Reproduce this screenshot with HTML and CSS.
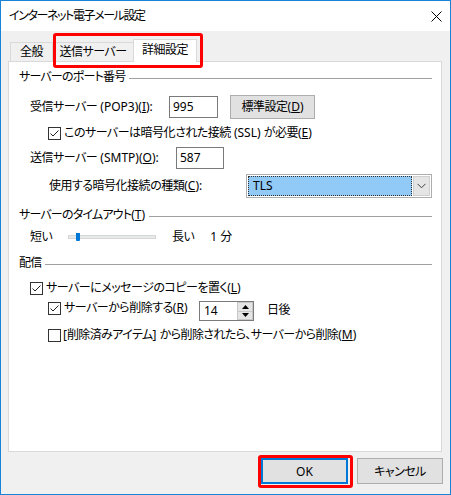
FILE: index.html
```html
<!DOCTYPE html>
<html lang="ja">
<head>
<meta charset="utf-8">
<title>インターネット電子メール設定</title>
<link rel="stylesheet" href="styles.css">
</head>
<body>
<div class="window">
  <div class="titlebar">
    <span class="title">インターネット電子メール設定</span>
    <svg class="close" width="11" height="11" viewBox="0 0 11 11"><path d="M0.5 0.5 L10.5 10.5 M10.5 0.5 L0.5 10.5" stroke="#000" stroke-width="1" fill="none"/></svg>
  </div>
  <div class="client">
    <div class="tabs">
      <div class="tab t1">全般</div>
      <div class="tab t2">送信サーバー</div>
      <div class="tab t3 active">詳細設定</div>
    </div>
    <div class="panel">
      <div class="group-header"><span>サーバーのポート番号</span><i class="rule"></i></div>

      <div class="row r-pop lv1">
        <span class="lbl w-pop">受信サーバー<span class="lat"> (POP3)(<u>I</u>):</span></span>
        <div class="input in-pop">995</div>
        <div class="btn std">標準設定<span class="lat">(<u>D</u>)</span></div>
      </div>

      <div class="row r-ssl lv2">
        <span class="cb checked"><svg width="11" height="11" viewBox="0 0 11 11"><path d="M1.5 5.5 L4 8 L9.5 2.5" stroke="#222" stroke-width="1" fill="none"/></svg></span>
        <span class="cb-text">このサーバーは暗号化された接続<span class="lat"> (SSL) </span>が必要<span class="lat">(<u>E</u>)</span></span>
      </div>

      <div class="row r-smtp lv1">
        <span class="lbl w-smtp">送信サーバー<span class="lat"> (SMTP)(<u>O</u>):</span></span>
        <div class="input in-smtp">587</div>
      </div>

      <div class="row r-enc lv2b">
        <span class="lbl w-enc">使用する暗号化接続の種類<span class="lat">(<u>C</u>):</span></span>
        <div class="combo">
          <div class="combo-value">TLS</div>
          <div class="combo-btn"><svg width="9" height="6" viewBox="0 0 9 6"><path d="M0.5 0.8 L4.5 4.8 L8.5 0.8" stroke="#444" stroke-width="1" fill="none"/></svg></div>
        </div>
      </div>

      <div class="group-header gh2"><span>サーバーのタイムアウト<span class="lat">(<u>T</u>)</span></span><i class="rule"></i></div>

      <div class="row r-slider lv1">
        <span class="lbl w-short">短い</span>
        <div class="track"><span class="thumb"></span></div>
        <span class="long">長い</span><span class="mins"><span class="lat">1 </span>分</span>
      </div>

      <div class="group-header gh3"><span>配信</span><i class="rule"></i></div>

      <div class="row r-cb1 lv1">
        <span class="cb checked"><svg width="11" height="11" viewBox="0 0 11 11"><path d="M1.5 5.5 L4 8 L9.5 2.5" stroke="#222" stroke-width="1" fill="none"/></svg></span>
        <span class="cb-text">サーバーにメッセージのコピーを置く<span class="lat">(<u>L</u>)</span></span>
      </div>

      <div class="row r-cb2 lv2">
        <div class="cb-line">
          <span class="cb checked"><svg width="11" height="11" viewBox="0 0 11 11"><path d="M1.5 5.5 L4 8 L9.5 2.5" stroke="#222" stroke-width="1" fill="none"/></svg></span>
          <span class="cb-text w-del">サーバーから削除する<span class="lat">(<u>R</u>)</span></span>
        </div>
        <div class="spin">
          <span class="spin-val">14</span>
          <div class="spin-btns">
            <span class="sb"><svg width="7" height="4" viewBox="0 0 7 4"><path d="M3.5 0 L7 4 L0 4 Z" fill="#000"/></svg></span>
            <span class="sb"><svg width="7" height="4" viewBox="0 0 7 4"><path d="M0 0 L7 0 L3.5 4 Z" fill="#000"/></svg></span>
          </div>
        </div>
        <span class="days">日後</span>
      </div>

      <div class="row r-cb3 lv2">
        <span class="cb"></span>
        <span class="cb-text"><span class="lat">[</span>削除済みアイテム<span class="lat">] </span>から削除されたら、サーバーから削除<span class="lat">(<u>M</u>)</span></span>
      </div>
    </div>
    <div class="actions">
      <div class="btn ok">OK</div>
      <div class="btn cancel">キャンセル</div>
    </div>
  </div>
  <div class="mark mark-tabs"></div>
  <div class="mark mark-ok"></div>
</div>
</body>
</html>
```
FILE: styles.css
```css
* { box-sizing: border-box; }
body {
  margin: 0;
  font-family: "Noto Sans", "Noto Sans CJK JP", sans-serif;
  font-size: 12px;
  font-feature-settings: "palt";
  letter-spacing: -0.5px;
  color: #000;
  background: #fff;
}
u { text-underline-offset: 1px; }
.lat { letter-spacing: 0; }
.window {
  position: relative;
  width: 451px;
  height: 495px;
  border: 1px solid #1883d7;
  background: #f0f0f0;
  display: flex;
  flex-direction: column;
}
.titlebar {
  height: 30px;
  background: #fff;
  display: flex;
  align-items: center;
  justify-content: space-between;
  padding: 0 8px 0 8px;
  flex: none;
}
.title { line-height: 16px; letter-spacing: -1.4px; }
.close { display: block; margin-top: 0; }
.client {
  flex: 1;
  display: flex;
  flex-direction: column;
  padding: 8px 0 0 7px;
}
.tabs {
  display: flex;
  align-items: flex-end;
  height: 22px;
  margin-left: 2px;
  position: relative;
  z-index: 1;
}
.tab {
  height: 19px;
  border: 1px solid #d9d9d9;
  border-bottom: none;
  background: #f0f0f0;
  display: flex;
  align-items: center;
  justify-content: center;
  line-height: 16px;
}
.t1 { width: 43px; }
.t2 { width: 82px; margin-left: -1px; }
.t3 { width: 64px; margin-left: -1px; }
.tab.active {
  height: 23px;
  margin-bottom: -1px;
  background: #fff;
  padding-bottom: 3px;
}
.panel {
  width: 434px;
  height: 391px;
  background: #fff;
  border: 1px solid #d9d9d9;
  padding: 7px 9px 0 10px;
  flex: none;
}
.group-header {
  display: flex;
  align-items: center;
  height: 16px;
  line-height: 16px;
  letter-spacing: -0.8px;
}
.group-header .rule {
  flex: 1;
  height: 1px;
  background: #a0a0a0;
  margin-left: 4px;
  margin-top: 2px;
}
.gh2 { margin-top: 9px; }
.gh3 { margin-top: 10px; }
.row {
  display: flex;
  align-items: center;
  line-height: 16px;
}
.lv1 { padding-left: 11px; }
.lv2 { padding-left: 29px; }
.lv2b { padding-left: 30px; }
.lbl { flex: none; white-space: nowrap; }
.r-pop { margin-top: 10px; height: 23px; }
.w-pop { width: 139px; }
.input {
  flex: none;
  height: 22px;
  border: 1px solid #7a7a7a;
  background: #fff;
  padding-left: 3px;
  display: flex;
  align-items: center;
  letter-spacing: 0;
}
.in-pop { width: 49px; }
.btn {
  flex: none;
  background: #e1e1e1;
  border: 1px solid #adadad;
  display: flex;
  align-items: center;
  justify-content: center;
}
.std { width: 85px; height: 24px; margin-left: 12px; }
.r-ssl { margin-top: 7px; height: 16px; }
.cb {
  flex: none;
  width: 13px;
  height: 13px;
  border: 1px solid #333;
  background: #fff;
  display: flex;
  align-items: center;
  justify-content: center;
}
.cb svg { display: block; }
.cb-text { margin-left: 3px; white-space: nowrap; }
.r-smtp { margin-top: 6px; height: 22px; }
.w-smtp { width: 146px; }
.in-smtp { width: 48px; }
.r-enc { margin-top: 5px; height: 24px; }
.w-enc { width: 197px; }
.combo {
  flex: none;
  width: 186px;
  height: 24px;
  border: 1px solid #adadad;
  background: #fff;
  padding: 1px;
  display: flex;
}
.combo-value {
  flex: 1;
  background: #91c9f7;
  border: 1px dotted #333;
  padding-left: 4px;
  display: flex;
  align-items: center;
  letter-spacing: 0;
}
.combo-btn {
  width: 17px;
  margin-left: 1px;
  background: #e5e5e5;
  border: 1px solid #cfcfcf;
  display: flex;
  align-items: center;
  justify-content: center;
}
.combo-btn svg { display: block; }
.r-slider { margin-top: 6px; height: 16px; }
.w-short { width: 38px; }
.track {
  position: relative;
  flex: none;
  width: 88px;
  height: 4px;
  background: #e7eaea;
  border: 1px solid #d6d6d6;
  margin-top: -1px;
}
.thumb {
  position: absolute;
  left: 7px;
  top: -3px;
  width: 4px;
  height: 8px;
  background: #0078d7;
  border-radius: 0 0 1px 1px;
}
.long { margin-left: 16px; }
.mins { margin-left: 16px; }
.r-cb1 { margin-top: 9px; height: 16px; }
.r-cb2 { margin-top: 3px; height: 22px; align-items: flex-start; }
.cb-line { display: flex; align-items: center; height: 16px; margin-top: 1px; }
.w-del { width: 135px; }
.spin {
  flex: none;
  width: 55px;
  height: 20px;
  margin-top: 2px;
  border: 1px solid #7a7a7a;
  background: #fff;
  display: flex;
  align-items: center;
  justify-content: space-between;
  padding-left: 4px;
  letter-spacing: 0;
}
.spin-btns {
  width: 16px;
  height: 18px;
  display: flex;
  flex-direction: column;
}
.sb {
  flex: 1;
  background: #e5e5e5;
  border: 1px solid #c8c8c8;
  display: flex;
  align-items: center;
  justify-content: center;
}
.sb + .sb { border-top: none; }
.sb svg { display: block; }
.days { margin-left: 13px; margin-top: 3px; }
.r-cb3 { margin-top: 6px; height: 16px; }
.r-cb3 .cb-text { margin-left: 2px; letter-spacing: -0.6px; }
.r-cb3 .cb-text .lat { letter-spacing: 0; }
.actions {
  display: flex;
  justify-content: flex-end;
  margin-top: 6px;
  padding-right: 7px;
}
.ok {
  width: 87px;
  height: 26px;
  border: 2px solid #0078d7;
  letter-spacing: 0;
}
.cancel {
  width: 86px;
  height: 26px;
  margin-left: 9px;
}
.mark {
  position: absolute;
  border: 3px solid #ff0000;
  border-radius: 3px;
  pointer-events: none;
  z-index: 5;
}
.mark-tabs { left: 52px; top: 32px; width: 150px; height: 35px; }
.mark-ok { left: 257px; top: 454px; width: 95px; height: 33px; }
```
